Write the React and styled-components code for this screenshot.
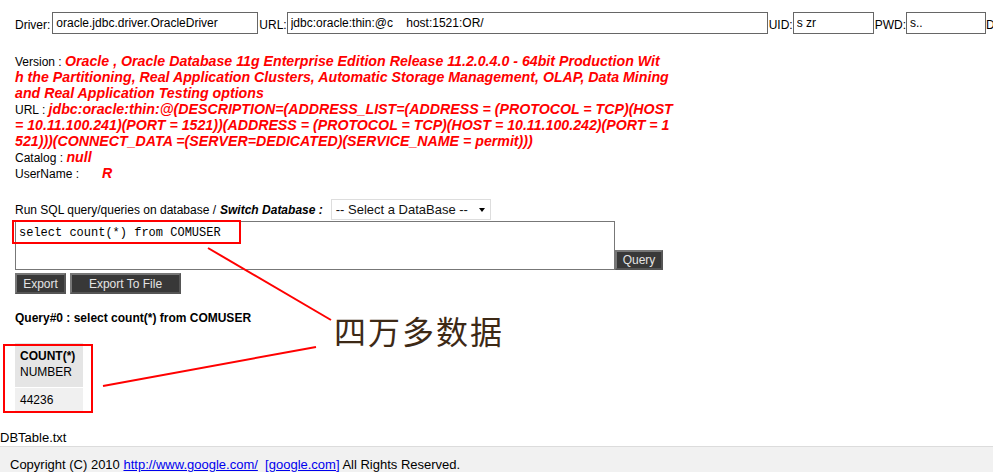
import React from 'react'
import styled, { createGlobalStyle } from 'styled-components'

const Global = createGlobalStyle`
  html, body {
    margin: 0;
    padding: 0;
    background: #fff;
    overflow: hidden;
  }
  body {
    font-family: "Liberation Sans", Arial, sans-serif;
    font-size: 13px;
    color: #000;
  }
`

const Page = styled.div`
  position: relative;
  width: 993px;
  height: 472px;
  overflow: hidden;
`

const Main = styled.div`
  padding-left: 15px;
`

const ConnRow = styled.div`
  display: flex;
  align-items: flex-end;
  white-space: nowrap;
  margin-top: 12px;
  height: 22px;
  width: 1100px;
`

const Label = styled.span`
  font-size: 12px;
  line-height: 16px;
  padding-bottom: 1px;
  padding-right: ${p => p.pad || 0}px;
`

const Field = styled.input`
  box-sizing: border-box;
  width: ${p => p.w}px;
  height: 22px;
  margin: 0 ${p => (p.last ? 0 : 1)}px 0 0;
  border: 1px solid #666;
  padding: 0 3px;
  font-family: "Liberation Sans", Arial, sans-serif;
  font-size: 12px;
  color: #000;
  background: #fff;
  outline: none;
`

const Info = styled.div`
  margin-top: 20px;
  width: 680px;
  font-size: 12px;
  line-height: 16px;
  white-space: nowrap;
`

const InfoLabel = styled.span`
  font-size: 12px;
  line-height: 12px;
`

const InfoValue = styled.span`
  color: #f00;
  font-weight: bold;
  font-style: italic;
  font-size: 14.2px;
  line-height: 12px;
`

const QueryHead = styled.div`
  margin-top: 17px;
  display: flex;
  align-items: center;
  font-size: 12px;
  height: 21px;
  white-space: nowrap;

  em {
    font-weight: bold;
    margin-left: 4px;
    margin-right: 8px;
  }
`

const Select = styled.div`
  box-sizing: border-box;
  width: 160px;
  height: 21px;
  border: 1px solid #ddd;
  display: flex;
  align-items: center;
  justify-content: space-between;
  padding: 0 5px 0 4px;
  font-size: 13px;
  background: #fff;
  color: #111;
`

const Caret = styled.span`
  width: 0;
  height: 0;
  border-left: 3.5px solid transparent;
  border-right: 3.5px solid transparent;
  border-top: 4px solid #000;
`

const EditRow = styled.div`
  margin-top: 1px;
  display: flex;
  align-items: flex-end;
`

const SqlBox = styled.div`
  box-sizing: border-box;
  width: 600px;
  height: 49px;
  border: 1px solid #777;
  padding: 4px 3px;
  font-family: "Liberation Mono", "Courier New", monospace;
  font-size: 12px;
  line-height: 14px;
`

const DarkButton = styled.button`
  display: block;
  box-sizing: border-box;
  width: ${p => p.w}px;
  height: ${p => p.h || 21}px;
  background: #383838;
  color: #e4e4e4;
  border: 2px solid #777;
  border-right-color: #555;
  border-bottom-color: #555;
  font-family: "Liberation Sans", Arial, sans-serif;
  font-size: 12px;
  padding: 0;
  margin: 0;
`

const ButtonRow = styled.div`
  margin-top: 3px;
  display: flex;
  gap: 4px;
`

const QueryTitle = styled.div`
  margin-top: 16px;
  font-size: 12px;
  font-weight: bold;
  line-height: 16px;
`

const Result = styled.div`
  margin-top: 17px;
  display: flex;
  flex-direction: column;
  gap: 1px;
  width: 68px;
  font-size: 12px;
`

const Cell = styled.div`
  box-sizing: border-box;
  height: ${p => (p.head ? 44 : 25)}px;
  background: ${p => (p.head ? '#e5e5e5' : '#f0f0f0')};
  padding: ${p => (p.head ? '5px 5px' : '4px 5px')};
  line-height: 16px;

  b {
    display: block;
  }
`

const FileName = styled.div`
  margin-top: 17px;
  line-height: 16px;
  font-size: 13px;
`

const Footer = styled.div`
  border-top: 1px solid #dcdcdc;
  background: #f1f1f1;
  padding: 10px 10px 20px;
  font-size: 13px;
  line-height: 16px;

  a {
    color: #00e;
    text-decoration: underline;
  }
`

const Highlight = styled.div`
  position: absolute;
  box-sizing: border-box;
  left: ${p => p.x}px;
  top: ${p => p.y}px;
  width: ${p => p.w}px;
  height: ${p => p.h}px;
  border: 2px solid #f00;
`

const Arrows = styled.svg`
  position: absolute;
  left: 0;
  top: 0;
  pointer-events: none;
`

const Note = styled.div`
  position: absolute;
  left: 334px;
  top: 307px;
  font-family: "Noto Sans CJK SC", sans-serif;
  font-weight: 400;
  font-size: 32px;
  letter-spacing: 2px;
  color: #3d2916;
`

export default function App() {
  return (
    <Page>
      <Global />
      <Main>
        <ConnRow>
          <Label pad={2}>Driver:</Label>
          <Field w={206} defaultValue="oracle.jdbc.driver.OracleDriver" />
          <Label>URL:</Label>
          <Field w={481} defaultValue="jdbc:oracle:thin:@c    host:1521:OR/" />
          <Label>UID:</Label>
          <Field w={81} defaultValue="s zr" />
          <Label>PWD:</Label>
          <Field w={80} last defaultValue="s.." />
          <Label>D</Label>
        </ConnRow>

        <Info>
          <InfoLabel>Version : </InfoLabel>
          <InfoValue>
            Oracle , Oracle Database 11g Enterprise Edition Release 11.2.0.4.0 - 64bit Production Wit<br />
            h the Partitioning, Real Application Clusters, Automatic Storage Management, OLAP, Data Mining<br />
            and Real Application Testing options
          </InfoValue>
          <br />
          <InfoLabel>URL : </InfoLabel>
          <InfoValue>
            jdbc:oracle:thin:@(DESCRIPTION=(ADDRESS_LIST=(ADDRESS = (PROTOCOL = TCP)(HOST<br />
            = 10.11.100.241)(PORT = 1521))(ADDRESS = (PROTOCOL = TCP)(HOST = 10.11.100.242)(PORT = 1<br />
            521)))(CONNECT_DATA =(SERVER=DEDICATED)(SERVICE_NAME = permit)))
          </InfoValue>
          <br />
          <InfoLabel>Catalog : </InfoLabel>
          <InfoValue>null</InfoValue>
          <br />
          <InfoLabel>UserName : </InfoLabel>
          <InfoValue>&nbsp;&nbsp;&nbsp;&nbsp;&nbsp;R</InfoValue>
        </Info>

        <QueryHead>
          Run SQL query/queries on database /<em>Switch Database :</em>
          <Select>
            -- Select a DataBase --
            <Caret />
          </Select>
        </QueryHead>

        <EditRow>
          <SqlBox>select count(*) from COMUSER</SqlBox>
          <DarkButton w={48} h={20}>Query</DarkButton>
        </EditRow>

        <ButtonRow>
          <DarkButton w={51}>Export</DarkButton>
          <DarkButton w={111}>Export To File</DarkButton>
        </ButtonRow>

        <QueryTitle>Query#0 : select count(*) from COMUSER</QueryTitle>

        <Result>
          <Cell head>
            <b>COUNT(*)</b>
            NUMBER
          </Cell>
          <Cell>44236</Cell>
        </Result>
      </Main>

      <FileName>DBTable.txt</FileName>
      <Footer>
        Copyright (C) 2010 <a href="#">http://www.google.com/</a>&nbsp; <a href="#">[google.com]</a> All Rights Reserved.
      </Footer>

      <Highlight x={12} y={220} w={229} h={24} />
      <Highlight x={3} y={344} w={90} h={69} />
      <Arrows width="993" height="472">
        <line x1="208" y1="248" x2="331" y2="320" stroke="#f00" strokeWidth="2" />
        <line x1="103" y1="386" x2="316" y2="347" stroke="#f00" strokeWidth="2" />
      </Arrows>
      <Note>四万多数据</Note>
    </Page>
  )
}
